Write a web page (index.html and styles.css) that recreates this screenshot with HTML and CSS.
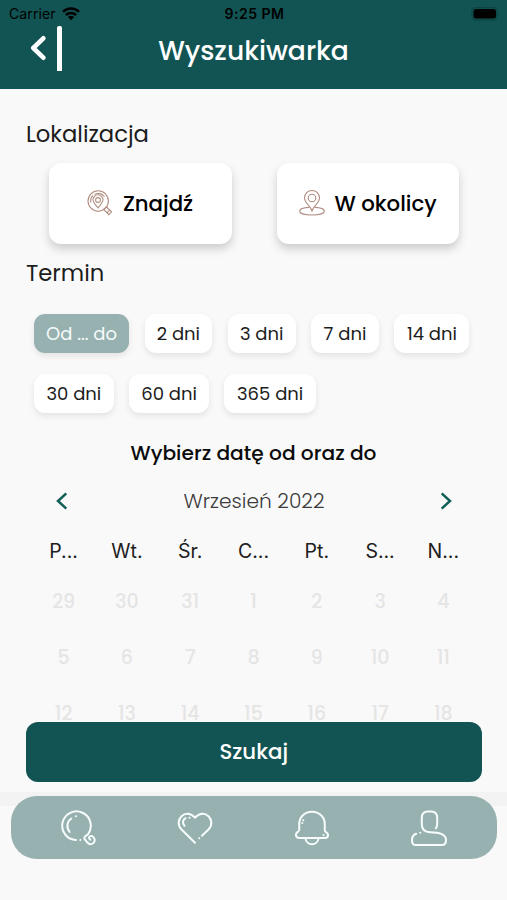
FILE: index.html
```html
<!DOCTYPE html>
<html lang="pl">
<head>
<meta charset="utf-8">
<title>Wyszukiwarka</title>
<link rel="stylesheet" href="styles.css">
</head>
<body>
<div class="app">
  <header class="header">
    <div class="status">
      <div class="carrier"><span>Carrier</span>
        <svg width="18" height="14" viewBox="0 0 18 14" fill="none" stroke="#000" stroke-width="2.5"><path d="M1 4.8C5.500.4 12.500.4 17 4.800M3.900 8C6.800 5.200 11.200 5.200 14.100 8"/><path d="M9 13.200 5.900 10.100Q9 7.600 12.100 10.100Z" fill="#000" stroke="none"/></svg>
      </div>
      <span class="clock">9:25 PM</span>
      <svg class="battery" width="30" height="14" viewBox="0 0 30 14"><rect x="1" y=".5" width="25" height="12.500" rx="4" fill="none" stroke="#0d4544" stroke-width="1.300"/><rect x="2.500" y="2" width="22.500" height="9.500" rx="2.500"/><path d="M27.500 5v4q1.500-2 0-4" fill="#0d4544"/></svg>
    </div>
    <div class="titlebar">
      <div class="back">
        <svg width="16" height="27" viewBox="0 0 16 27" fill="none" stroke="#fff" stroke-width="4.600" stroke-linecap="round" stroke-linejoin="round"><path d="M13.300 3.300 3.300 13 13.300 22.700"/></svg>
        <span class="divider"></span>
      </div>
      <h1><span>Wyszukiwarka</span></h1>
      <div class="spacer"></div>
    </div>
  </header>

  <main class="content">
    <h2>Lokalizacja</h2>
    <div class="places">
      <button class="place">
        <svg width="26" height="26" viewBox="0 0 26 26" fill="none" stroke="#b08d80" stroke-width="1.100"><circle cx="11.200" cy="11" r="10.200"/><path d="M3.800 12.500A7.600 7.600 0 0 1 6 5.500M7.500 4.400A7.600 7.600 0 0 1 17.500 6.800"/><path d="M11 17.800C8 14.200 6 12.300 6 9.800a5 5 0 0 1 10 0C16 12.300 14 14.200 11 17.800Z"/><circle cx="11" cy="10" r="2.400"/><path d="m16.700 19.500 2.700-2.700 5.200 5-2.800 2.800ZM20 22.800l2.800-2.800"/></svg>
        <span class="label">Znajdź</span>
      </button>
      <button class="place">
        <svg width="26" height="26" viewBox="0 0 26 26" fill="none" stroke="#b08d80" stroke-width="1.100"><path d="M13 21.500C12.500 16.500 5.500 13.200 5.500 8a7.500 7.500 0 0 1 15 0C20.500 13.200 13.500 16.500 13 21.500Z"/><circle cx="13" cy="8" r="3.800"/><path d="M10.500 17.400C4.500 17.600.700 19.200.700 21.200c0 5 24.600 5 24.600 0 0-2-3.800-3.600-9.800-3.800"/></svg>
        <span class="label">W okolicy</span>
      </button>
    </div>
    <h2 class="term">Termin</h2>
    <div class="chips">
      <button class="chip wide active">Od ... do</button>
      <button class="chip">2 dni</button>
      <button class="chip">3 dni</button>
      <button class="chip">7 dni</button>
      <button class="chip medium">14 dni</button>
      <button class="chip large">30 dni</button>
      <button class="chip large">60 dni</button>
      <button class="chip larger">365 dni</button>
    </div>
    <h3><span>Wybierz datę od oraz do</span></h3>
    <div class="month">
      <svg width="12" height="18" viewBox="0 0 12 18"><path d="M10.300 1.300 2 9l8.300 7.700"/></svg>
      <span>Wrzesień 2022</span>
      <svg width="12" height="18" viewBox="0 0 12 18"><path d="m1.700 1.300 8.300 7.700-8.300 7.700"/></svg>
    </div>
    <div class="week names"><span>P...</span><span>Wt.</span><span>Śr.</span><span>C...</span><span>Pt.</span><span>S...</span><span>N...</span></div>
    <div class="week"><span>29</span><span>30</span><span>31</span><span>1</span><span>2</span><span>3</span><span>4</span></div>
    <div class="week"><span>5</span><span>6</span><span>7</span><span>8</span><span>9</span><span>10</span><span>11</span></div>
    <div class="week last"><span>12</span><span>13</span><span>14</span><span>15</span><span>16</span><span>17</span><span>18</span></div>
  </main>

  <button class="submit">Szukaj</button>

  <footer class="footer">
    <nav class="tabs">
      <svg width="36" height="36" viewBox="0 0 36 36"><path d="M16 30A14.300 14.300 0 1 1 28 24.200C26 25.800 23.800 26.800 24.300 28.500C25.500 30.500 27 33.200 29.500 34C33 35 36 31 34 28C33 26.200 30.500 25 29.200 27C28.700 28.200 29.300 29 30.200 29.600"/><path d="M9.600 22C6 17.500 7 11.500 11.300 8.500M15.800 6.300h.1M20.300 30h.1"/></svg>
      <svg width="36" height="36" viewBox="0 0 36 36"><path d="M18 32.700 4.300 19.300C-3.800 10.500 8.500-3 18 7.700 27.500-3 39.800 10.500 31.700 19.300L25 25.700M22.200 28.300h.1"/><path d="M7.500 15.700C5 13 5.700 9.300 8.600 8.200M12.500 7.800h.1"/></svg>
      <svg width="36" height="36" viewBox="0 0 36 36"><path d="M5.200 20.200V14.500C5.200 7 10.800 1.800 18 1.800S30.800 7 30.800 14.500v6.300c0 1.200 3.300 1.700 3.300 4.200 0 2-1.300 2.900-3.300 2.900H5.200c-4 0-4.200-4.800-1-6.300M11.500 28.500c.8 7.600 12.200 7.600 13 0M8.300 13v.1M9.200 10.200h.1M29.500 25h.1"/></svg>
      <svg width="36" height="36" viewBox="0 0 36 36"><path d="M24.800 18.200c1-1 1.400-2 1.400-4V8c0-4.500-2-6.500-6-6.500h-3.400c-4 0-6 2-6 6.500v6c0 5 2.700 8.200 8.200 8.200 10 0 16 2.800 16 7.800 0 3-1.200 5-4 5H5c-2.800 0-4-1.700-4-4.700 0-3.500 1.200-5.600 4.200-6.600M9.200 22.800h.1"/></svg>
    </nav>
  </footer>
</div>
</body>
</html>
```
FILE: styles.css
```css
* { box-sizing: border-box; }
body {
  margin: 0;
  background: #f9f9f9;
  color: #1c1c1c;
  font-family: Poppins, Inter, "Liberation Sans", sans-serif;
}
button { border: 0; padding: 0; font: inherit; color: inherit; }
h1, h2, h3 { margin: 0; }
.app { display: flex; flex-direction: column; height: 900px; overflow: hidden; }

.header { height: 88.500px; flex: none; background: #125453; }
.status {
  display: grid;
  grid-template-columns: 1fr auto 1fr;
  align-items: center;
  height: 27px;
  padding: 0 6px 0 9px;
  color: #000;
  font-family: Inter, "Liberation Sans", sans-serif;
  font-size: 14px;
}
.carrier { display: flex; align-items: center; gap: 6px; }
.carrier span { letter-spacing: .1px; }
.clock { font-weight: 600; letter-spacing: .5px; margin-right: 1px; }
.battery { justify-self: end; }
.titlebar { display: grid; grid-template-columns: 80px 1fr 80px; height: 46px; align-items: center; }
.back { display: flex; align-items: center; gap: 11px; padding-left: 30px; margin-top: -4px; }
.divider { width: 5px; height: 45px; background: #fff; border-radius: 2px 2px 0 0; }
h1 { color: #fff; font-size: 26.600px; font-weight: 500; text-align: center; padding-top: 2px; }

.content { flex: none; height: 633.500px; overflow: hidden; }
h2 { padding-left: 26px; font-size: 22.700px; line-height: 32px; font-weight: 400; margin-top: 29px; }
.places { display: flex; gap: 45px; margin: 13px 48px 0 49px; }
.place {
  display: flex;
  align-items: center;
  justify-content: center;
  gap: 9.500px;
  width: 182.500px;
  height: 81px;
  border-radius: 12px;
  background: #fff;
  color: #000;
  font-size: 21.300px;
  font-weight: 500;
  box-shadow: 0 5px 10px rgba(0, 0, 0, .18);
}
h2.term { margin-top: 13px; }
.chips { display: flex; flex-wrap: wrap; gap: 20.500px 15.500px; margin: 25px 30px 0 34px; }
.chip {
  width: 67.800px;
  height: 39.500px;
  border-radius: 11px;
  background: #fff;
  font-size: 18px;
  box-shadow: 0 3px 6px rgba(0, 0, 0, .09);
}
.chip.wide { width: 95px; }
.chip.medium { width: 75px; }
.chip.large { width: 79.700px; }
.chip.larger { width: 91.500px; }
.chip.active { background: #96b1af; color: #f5fbfa; }
h3 { margin-top: 24px; text-align: center; color: #0b0b0b; font-size: 20.200px; line-height: 32px; font-weight: 500; }
.month {
  display: flex;
  align-items: center;
  justify-content: space-between;
  height: 32px;
  margin: 16px 55px 0 56px;
  color: #3b3b3b;
  font-size: 20.200px;
  font-weight: 300;
}
.month svg { fill: none; stroke: #125f57; stroke-width: 2.500; }
.week {
  display: grid;
  grid-template-columns: repeat(7, 1fr);
  margin: 0 32px;
  height: 56px;
  line-height: 56px;
  text-align: center;
  color: #e5e5e5;
  font-size: 19px;
  font-weight: 500;
}
.week.names {
  margin-top: 18px;
  height: 38.500px;
  line-height: 33px;
  color: #202020;
  font-family: Inter, "Liberation Sans", sans-serif;
  font-size: 19.500px;
  font-weight: 400;
}

.submit {
  flex: none;
  height: 60px;
  margin: 0 25.500px 0 26px;
  border-radius: 12px;
  background: #125453;
  color: #fff;
  font-size: 21.300px;
  font-weight: 500;
  padding-bottom: 1px;
}
.footer { margin-top: 10px; padding: 4px 10.500px 0 11px; background: linear-gradient(#f3f3f3 14px, #f9f9f9 14px); }
.tabs {
  display: flex;
  justify-content: space-between;
  align-items: center;
  height: 62.500px;
  padding: 1px 49px 0 49px;
  border-radius: 26px;
  background: #96b1af;
}
.tabs svg { fill: none; stroke: #f7fdfc; stroke-width: 2; stroke-linecap: round; stroke-linejoin: round; }
```
